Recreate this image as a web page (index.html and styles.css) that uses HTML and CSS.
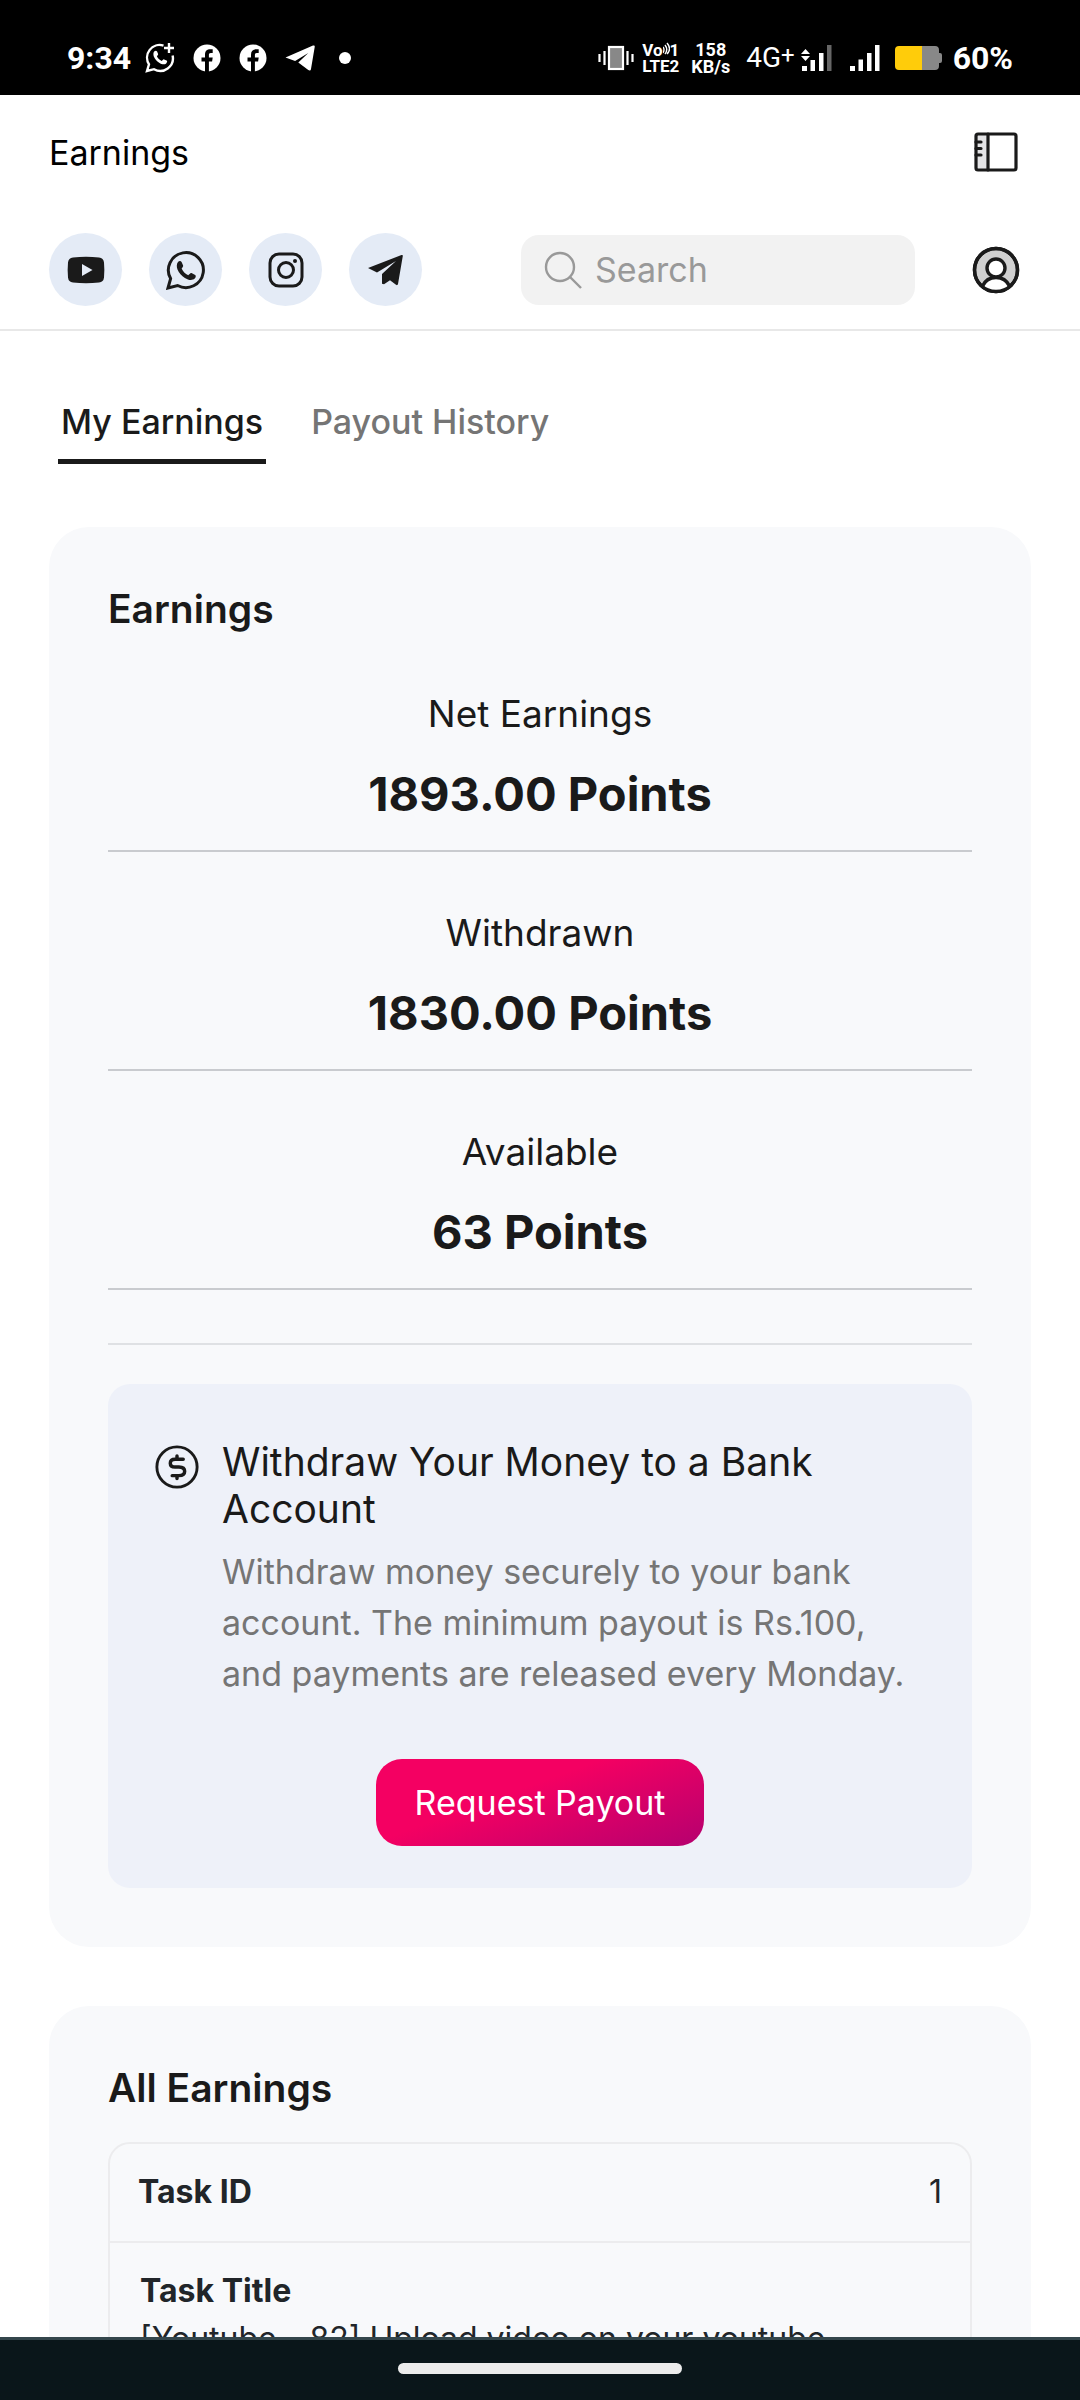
FILE: index.html
```html
<!DOCTYPE html>
<html lang="en">
<head>
  <meta charset="UTF-8">
  <meta name="viewport" content="width=device-width, initial-scale=1.0">
  <title>Earnings</title>
  <link rel="stylesheet" href="styles.css">
</head>
<body>

  <!-- Status bar -->
  <div class="status-bar">
    <div class="status-left">
      <span class="clock">9:34</span>
      <svg class="s-icon wa" viewBox="0 0 30 30" fill="none" stroke="#fff" stroke-width="2.4">
        <path d="M18.5 2.6A12.6 12.6 0 0 0 4 21.3L2 28l7-1.8a12.6 12.6 0 0 0 18.6-13.6"/>
        <path d="M24 0v10M19 5h10"/>
        <path fill="#fff" stroke="none" d="M9.4 8.3c1-1 2.200-.7 2.700.3l1 2.300c.3.8-.9 1.700-1.200 2.400.9 2.100 2.600 3.700 4.800 4.600.8-.2 1.500-1.800 2.400-1.500l2.500 1.200c1 .6.5 2-.4 2.800-1.700 1.600-4.500 1-7-.6-2.400-1.500-4.400-3.800-5.400-6.300-.6-2-.6-4 .6-5.200z"/>
      </svg>
      <svg class="s-icon" viewBox="0 0 28 28"><circle cx="14" cy="14" r="13.500" fill="#fff"/><path d="M12 28V17.500H8.500v-4H12v-2.800c0-3.600 2-5.400 5.300-5.400h2.400v3.800h-1.900c-1.400 0-1.900.7-1.900 1.900v2.500h3.800l-.6 4h-3.200V28z" fill="#000"/></svg>
      <svg class="s-icon" viewBox="0 0 28 28"><circle cx="14" cy="14" r="13.500" fill="#fff"/><path d="M12 28V17.500H8.500v-4H12v-2.800c0-3.600 2-5.400 5.300-5.400h2.400v3.800h-1.900c-1.400 0-1.900.7-1.900 1.900v2.500h3.800l-.6 4h-3.200V28z" fill="#000"/></svg>
      <svg class="s-icon plane" viewBox="0 0 30 26"><path fill="#fff" d="M.5 12.500 28 .6c1.200-.5 2 .1 1.700 1.500L26 24c-.3 1.600-1.500 1.900-2.700 1l-10-7.500 10-9.500-13.200 8z"/></svg>
      <span class="dot"></span>
    </div>
    <div class="status-right">
      <svg class="vibrate" viewBox="0 0 36 26" fill="none" stroke="#fff" stroke-width="2.200">
        <rect x="11" y="2" width="14" height="22" fill="#888"/>
        <path d="M6.500 6v14M1.500 9v8M29.500 6v14M34.500 9v8"/>
      </svg>
      <span class="tiny volte"><span>Vo<svg class="waves" viewBox="0 0 7 14" fill="none" stroke="#fff" stroke-width="1.400"><path d="M0 5q2 2.500 0 6M2 3q3.500 4.500 0 9M4 1q5 6 0 11"/></svg>1</span><span>LTE2</span></span>
      <span class="tiny speed"><span>158</span><span>KB/s</span></span>
      <span class="net">4G<sup>+</sup></span>
      <svg class="signal" viewBox="0 0 32 28" fill="#fff">
        <path d="M0 10l4.500-5L9 10zM0 12h9l-4.500 5zM1 22h5v5H1zM9.500 16h4.500v11H9.500zM18 9h4.500v18H18z"/>
        <path fill="#666" d="M26 1h4.500v26H26z"/>
      </svg>
      <svg class="signal" viewBox="0 0 32 28" fill="#fff"><path d="M1 22h5v5H1zM9.500 15.500h4.500V27H9.500zM18 9h4.500v18H18zM26 1h4.500v26H26z"/></svg>
      <svg class="battery" viewBox="0 0 48 26"><path fill="#888" d="M27 1h13q4 0 4 4v3h1q2 0 2 2v6q0 2-2 2h-1v3q0 4-4 4H27z"/><path fill="#ffcc0a" d="M27 1v24H4q-4 0-4-4V5q0-4 4-4z"/></svg>
      <span class="percent">60%</span>
    </div>
  </div>

  <!-- Header -->
  <header class="header">
    <div class="header-row">
      <h1>Earnings</h1>
      <button class="icon-btn" aria-label="Toggle sidebar">
        <svg viewBox="0 0 48 48" fill="none" stroke="#1a1a1a" stroke-width="3.200" stroke-linecap="round">
          <path d="M5 6h11v36H5z" fill="#e4e4e6" stroke="none"/>
          <rect x="4" y="6" width="40" height="36" rx="2"/>
          <path d="M16 6v36M4 14h5M4 20.500h5M4 27h5"/>
        </svg>
      </button>
    </div>
    <div class="header-row">
      <nav class="socials">
        <a href="#" aria-label="YouTube">
          <svg viewBox="0 0 40 40"><path fill="#1a1a1a" d="M7 7.500q13-1.500 26 0 4.500.5 5 5 .7 7.500 0 15-.5 4.500-5 5-13 1.500-26 0-4.500-.5-5-5-.7-7.500 0-15 .5-4.500 5-5z"/><path fill="#e4ebf6" d="M16 14l10.500 6L16 26z"/></svg>
        </a>
        <a href="#" aria-label="WhatsApp">
          <svg viewBox="0 0 40 40"><path fill="none" stroke="#1a1a1a" stroke-width="3" d="M2 38l2.600-9.400A17.500 17.500 0 1 1 11.600 35.500z"/><path fill="#1a1a1a" d="M12 12c1.200-1.400 3-1.200 3.700.2l1.400 3.300c.4 1-.9 2.200-1.500 3.100 1.300 3 3.500 5.200 6.700 6.600 1-.5 2-2.500 3.200-2.100l3.700 1.900c1.100.8.5 2.500-.5 3.600-2.300 2.200-6.200 1.700-9.800-.6-3.300-2-6-5-7.400-8.500-1-2.700-1-5.700.5-7.500z"/></svg>
        </a>
        <a href="#" aria-label="Instagram">
          <svg viewBox="0 0 40 40" fill="none" stroke="#1a1a1a" stroke-width="3"><rect x="4" y="4" width="32" height="32" rx="9"/><circle cx="20" cy="20" r="7.500"/><circle cx="29" cy="11" r="2" fill="#1a1a1a" stroke="none"/></svg>
        </a>
        <a href="#" aria-label="Telegram">
          <svg viewBox="0 0 40 40" fill="#1a1a1a"><path d="M2 18 35.500 5q1.500-.5 1.300 1L32 34q-.4 1.800-2 .8l-6-4.500-6 4-2-.6V24L30 11 11 22.500z"/></svg>
        </a>
      </nav>
      <div class="header-tools">
        <label class="search">
          <svg viewBox="0 0 40 40" fill="none" stroke="#999" stroke-width="2.400"><circle cx="17" cy="17" r="14"/><path d="M27 27l11 11"/></svg>
          <input type="text" placeholder="Search" aria-label="Search">
        </label>
        <button class="icon-btn" aria-label="Profile">
          <svg viewBox="0 0 48 48" fill="none" stroke="#1a1a1a" stroke-width="3.400">
            <circle cx="24" cy="24" r="21.500" fill="#d0d0d0"/>
            <path d="M11 40a15 15 0 0 1 26 0q-13 11-26 0z" fill="#fff" stroke="none"/>
            <path d="M10.500 40a15 15 0 0 1 27 0"/>
            <circle cx="24" cy="22" r="9" fill="#fff"/>
            <circle cx="24" cy="24" r="21.500"/>
          </svg>
        </button>
      </div>
    </div>
  </header>

  <!-- Content -->
  <main class="content">
    <nav class="tabs">
      <button class="tab active">My Earnings</button>
      <button class="tab">Payout History</button>
    </nav>

    <section class="card">
      <h2>Earnings</h2>
      <div class="stat">
        <p>Net Earnings</p>
        <strong>1893.00 Points</strong>
      </div>
      <div class="stat">
        <p>Withdrawn</p>
        <strong>1830.00 Points</strong>
      </div>
      <div class="stat">
        <p>Available</p>
        <strong>63 Points</strong>
      </div>
      <hr>
      <div class="withdraw">
        <div class="withdraw-info">
          <svg viewBox="0 0 48 48" fill="none" stroke="#1a1a1a" stroke-width="3" stroke-linecap="round" stroke-linejoin="round">
            <circle cx="24" cy="24" r="21"/>
            <path stroke-width="3.600" d="M30.500 16H22q-5 0-5 4t5 4h4q6 0 6 4.500t-6 4.500h-7M24 12.500V16M24 33v3"/>
          </svg>
          <div>
            <h3>Withdraw Your Money to a Bank Account</h3>
            <p>Withdraw money securely to your bank account. The minimum payout is Rs.100, and payments are released every Monday.</p>
          </div>
        </div>
        <button class="payout-btn">Request Payout</button>
      </div>
    </section>

    <section class="card">
      <h2>All Earnings</h2>
      <table class="tasks">
        <tr>
          <th scope="row">Task ID</th>
          <td class="num">1</td>
        </tr>
        <tr>
          <td class="task-title" colspan="2"><b>Task Title</b>[Youtube - 82] Upload video on your youtube</td>
        </tr>
      </table>
    </section>
  </main>

  <!-- Gesture bar -->
  <div class="gesture-bar"><span></span></div>

</body>
</html>
```
FILE: styles.css
```css
* {
  box-sizing: border-box;
  margin: 0;
  padding: 0;
}

body {
  display: flex;
  flex-direction: column;
  height: 100vh;
  overflow: hidden;
  background: #fff;
  color: #1a1a1a;
  font-family: Inter, "Liberation Sans", sans-serif;
  font-size: 34px;
}

button, input {
  font: inherit;
  border: none;
  background: none;
}

svg {
  display: block;
  flex-shrink: 0;
}

/* Status bar */
.status-bar {
  display: flex;
  flex-shrink: 0;
  justify-content: space-between;
  height: 95px;
  padding: 20px 67px 0;
  background: #000;
  color: #fff;
  font-family: Roboto, sans-serif;
  font-weight: 700;
}
.status-left, .status-right {
  display: flex;
  align-items: center;
}
.clock, .percent {
  font-size: 32px;
}
.s-icon {
  width: 28px;
  height: 28px;
  margin-left: 18px;
}
.s-icon.wa {
  width: 30px;
  height: 30px;
  margin-left: 14px;
}
.s-icon.plane {
  width: 30px;
}
.dot {
  width: 12px;
  height: 12px;
  margin-left: 24px;
  border-radius: 50%;
  background: #fff;
}
.vibrate {
  width: 36px;
  height: 26px;
}
.tiny {
  display: flex;
  flex-direction: column;
  align-items: center;
  font-size: 18px;
  line-height: 17px;
}
.tiny span {
  display: flex;
}
.volte {
  margin-left: 8px;
  font-size: 17px;
  line-height: 16px;
}
.waves {
  width: 7px;
  height: 14px;
}
.speed {
  margin-left: 12px;
}
.net {
  margin-left: 16px;
  font-size: 28px;
  font-weight: 400;
  line-height: 32px;
}
.net sup {
  font-size: 24px;
  line-height: 0;
  vertical-align: 4px;
}
.signal {
  width: 32px;
  height: 28px;
  margin-left: 6px;
}
.signal + .signal {
  margin-left: 16px;
}
.battery {
  width: 48px;
  height: 26px;
  margin-left: 14px;
}
.percent {
  margin-left: 10px;
}

/* Header */
.header {
  flex-shrink: 0;
  padding: 33px 49px 23px;
  border-bottom: 2px solid #e8e8e8;
}
.header-row {
  display: flex;
  align-items: center;
  justify-content: space-between;
}
.header-row + .header-row {
  margin-top: 57px;
}
.header h1 {
  color: #000;
  font-size: 34px;
  font-weight: 400;
}
.icon-btn {
  padding: 0 11px;
}
.icon-btn svg {
  width: 48px;
  height: 48px;
}
.socials {
  display: flex;
  gap: 27px;
}
.socials a {
  display: grid;
  place-items: center;
  width: 73px;
  height: 73px;
  border-radius: 50%;
  background: #e4ebf6;
}
.socials svg {
  width: 40px;
  height: 40px;
}
.header-tools {
  display: flex;
  align-items: center;
  gap: 46px;
}
.search {
  display: flex;
  align-items: center;
  gap: 12px;
  width: 394px;
  height: 70px;
  padding: 0 22px;
  border-radius: 18px;
  background: #f2f2f2;
}
.search svg {
  width: 40px;
  height: 40px;
}
.search input {
  width: 100%;
  min-width: 0;
}
.search input::placeholder {
  color: #999;
  opacity: 1;
}

/* Content */
.content {
  flex: 1;
  min-height: 0;
  padding: 0 49px;
  overflow: hidden;
}
.tabs {
  display: flex;
  gap: 42px;
  padding: 64px 9px 63px;
}
.tab {
  padding: 6px 3px 16px;
  border-bottom: 5px solid transparent;
  color: #757575;
  font-weight: 500;
  line-height: 42px;
}
.tab.active {
  border-color: #1a1a1a;
  color: #1a1a1a;
}
.card {
  margin-bottom: 59px;
  padding: 58px 59px 59px;
  border-radius: 40px;
  background: #f8f9fb;
}
.card h2 {
  font-size: 39px;
  font-weight: 600;
  line-height: 48px;
}

/* Points summary */
.stat {
  padding: 59px 0 28px;
  border-bottom: 2px solid #c9cbcf;
  text-align: center;
}
.stat p {
  font-size: 37px;
  line-height: 44px;
}
.stat strong {
  display: block;
  margin-top: 30px;
  font-size: 47px;
  font-weight: 700;
  line-height: 56px;
}
hr {
  margin: 53px 0 39px;
  border: none;
  border-top: 2px solid #dfe1e4;
}

/* Withdraw box */
.withdraw {
  padding: 54px 46px 42px;
  border-radius: 22px;
  background: #eef1f9;
}
.withdraw-info {
  display: flex;
  gap: 22px;
}
.withdraw-info svg {
  width: 46px;
  height: 46px;
  margin-top: 6px;
}
.withdraw-info h3 {
  font-size: 39px;
  font-weight: 400;
  line-height: 47px;
}
.withdraw-info p {
  margin-top: 14px;
  color: #757575;
  line-height: 51px;
}
.payout-btn {
  display: block;
  margin: 60px auto 0;
  padding: 0 39px;
  border-radius: 26px;
  background: linear-gradient(160deg, #f40062 40%, #b5006f);
  color: #fff;
  line-height: 87px;
}

/* Earnings table */
.tasks {
  width: 100%;
  margin-top: 30px;
  border: 2px solid #ececee;
  border-radius: 22px;
  border-spacing: 0;
  color: #212529;
  font-size: 32px;
}
.tasks th, .tasks .num {
  padding: 24px 28px 25px;
  border-bottom: 2px solid #ececee;
  line-height: 48px;
}
.tasks th {
  text-align: left;
}
.num {
  text-align: right;
}
.task-title {
  padding: 24px 30px;
  line-height: 48px;
}
.task-title b {
  display: block;
}

/* Gesture bar */
.gesture-bar {
  flex-shrink: 0;
  height: 63px;
  padding-top: 23px;
  border-top: 3px solid #34464c;
  background: #0a161a;
}
.gesture-bar span {
  display: block;
  width: 284px;
  height: 11px;
  margin: 0 auto;
  border-radius: 6px;
  background: #ececec;
}
```
